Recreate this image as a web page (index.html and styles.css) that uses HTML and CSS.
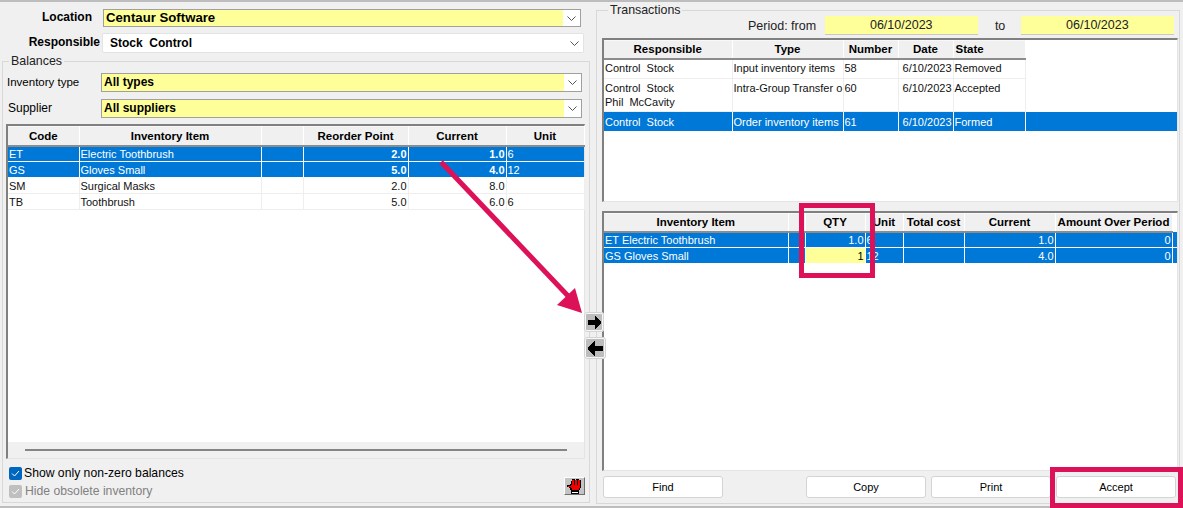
FILE: index.html
```html
<!DOCTYPE html>
<html lang="en">
<head>
    <meta charset="UTF-8">
    <title>Inventory Order</title>
    <link rel="stylesheet" href="styles.css">
</head>
<body>
    <div class="window">
        <div class="left">
            <div class="field field-location">
                <label>Location</label>
                <div class="combo combo-yellow combo-big">Centaur Software<span class="drop"><svg width="9" height="5" viewBox="0 0 9 5"><path d="M0.5 0.5 L4.5 4.5 L8.5 0.5" fill="none" stroke="#555"/></svg></span></div>
            </div>
            <div class="field field-responsible">
                <label>Responsible</label>
                <div class="combo combo-white">Stock&nbsp; Control<span class="drop"><svg width="9" height="5" viewBox="0 0 9 5"><path d="M0.5 0.5 L4.5 4.5 L8.5 0.5" fill="none" stroke="#555"/></svg></span></div>
            </div>

            <fieldset class="group group-balances">
                <legend>Balances</legend>
                <div class="field field-type">
                    <label>Inventory type</label>
                    <div class="combo combo-yellow">All types<span class="drop"><svg width="9" height="5" viewBox="0 0 9 5"><path d="M0.5 0.5 L4.5 4.5 L8.5 0.5" fill="none" stroke="#555"/></svg></span></div>
                </div>
                <div class="field field-supplier">
                    <label>Supplier</label>
                    <div class="combo combo-yellow">All suppliers<span class="drop"><svg width="9" height="5" viewBox="0 0 9 5"><path d="M0.5 0.5 L4.5 4.5 L8.5 0.5" fill="none" stroke="#555"/></svg></span></div>
                </div>

                <div class="grid grid-balances">
                    <table>
                        <colgroup>
                            <col class="w71"><col class="w182"><col class="w42"><col class="w105"><col class="w98"><col class="w78">
                        </colgroup>
                        <thead>
                            <tr><th>Code</th><th>Inventory Item</th><th></th><th>Reorder Point</th><th>Current</th><th>Unit</th></tr>
                        </thead>
                        <tbody>
                            <tr class="sel"><td>ET</td><td>Electric Toothbrush</td><td></td><td class="num strong">2.0</td><td class="num strong">1.0</td><td>6</td></tr>
                            <tr class="sel"><td>GS</td><td>Gloves Small</td><td></td><td class="num strong">5.0</td><td class="num strong">4.0</td><td>12</td></tr>
                            <tr><td>SM</td><td>Surgical Masks</td><td></td><td class="num">2.0</td><td class="num">8.0</td><td></td></tr>
                            <tr><td>TB</td><td>Toothbrush</td><td></td><td class="num">5.0</td><td class="num">6.0</td><td>6</td></tr>
                        </tbody>
                    </table>
                    <div class="hscroll"><div class="hscroll-line"></div></div>
                </div>

                <div class="balances-foot">
                    <div class="checks">
                        <div class="check">
                            <span class="box box-on"><svg width="9" height="7" viewBox="0 0 9 7"><path d="M1 3.5 L3.5 6 L8 1" fill="none" stroke="#fff"/></svg></span>
                            Show only non-zero balances
                        </div>
                        <div class="check check-off">
                            <span class="box box-off"><svg width="9" height="7" viewBox="0 0 9 7"><path d="M1 3.5 L3.5 6 L8 1" fill="none" stroke="#fff"/></svg></span>
                            Hide obsolete inventory
                        </div>
                    </div>
                    <div class="hand-btn">
                        <svg width="15" height="15" viewBox="0 0 15 15" shape-rendering="crispEdges">
                            <path d="M4 2h1V0h3v1h1V0h3v1h2v8h-1v2h-1v1H4v-1H3V9H2V8H0V6h3V5h1z" fill="#000"/>
                            <path d="M5 1h2v6H5zM8 1h2v6H8zM11 1h2v6h-2z" fill="#f00000"/>
                            <path d="M4 6h9v3h-1v2H5V9H4V8H1V7h3z" fill="#f00000"/>
                            <path d="M4 12h8v3H4z" fill="#000"/>
                            <path d="M5 13h6v1H5z" fill="#fff"/>
                        </svg>
                    </div>
                </div>
            </fieldset>
        </div>

        <fieldset class="group group-trans">
            <legend>Transactions</legend>
            <div class="period">
                <span class="period-from">Period: from</span>
                <div class="date">06/10/2023</div>
                <span class="period-to">to</span>
                <div class="date">06/10/2023</div>
            </div>

            <div class="grid grid-trans">
                <table>
                    <colgroup>
                        <col class="w128"><col class="w111"><col class="w55"><col class="w55"><col class="w72"><col>
                    </colgroup>
                    <thead>
                        <tr><th>Responsible</th><th>Type</th><th>Number</th><th>Date</th><th class="left-head">State</th><th class="blank"></th></tr>
                    </thead>
                    <tbody>
                        <tr class="r20 first"><td>Control&nbsp; Stock</td><td>Input inventory items</td><td>58</td><td class="num">6/10/2023</td><td>Removed</td><td class="blank"></td></tr>
                        <tr class="r33"><td>Control&nbsp; Stock<br>Phil&nbsp; McCavity</td><td>Intra-Group Transfer o</td><td>60</td><td class="num">6/10/2023</td><td>Accepted</td><td class="blank"></td></tr>
                        <tr class="sel r20"><td>Control&nbsp; Stock</td><td>Order inventory items</td><td>61</td><td class="num">6/10/2023</td><td>Formed</td><td></td></tr>
                    </tbody>
                </table>
            </div>

            <div class="grid grid-items">
                <table>
                    <colgroup>
                        <col class="w184"><col class="w17"><col class="w60"><col class="w38"><col class="w61"><col class="w91"><col class="w117"><col>
                    </colgroup>
                    <thead>
                        <tr><th>Inventory Item</th><th></th><th>QTY</th><th>Unit</th><th>Total cost</th><th>Current</th><th>Amount Over Period</th><th class="blank"></th></tr>
                    </thead>
                    <tbody>
                        <tr class="sel"><td>ET Electric Toothbrush</td><td></td><td class="num">1.0</td><td>6</td><td></td><td class="num">1.0</td><td class="num">0</td><td></td></tr>
                        <tr class="sel"><td>GS Gloves Small</td><td></td><td class="num editing">1</td><td>12</td><td></td><td class="num">4.0</td><td class="num">0</td><td></td></tr>
                    </tbody>
                </table>
            </div>

            <div class="actions">
                <button class="btn">Find</button>
                <span class="spacer"></span>
                <button class="btn">Copy</button>
                <button class="btn">Print</button>
                <button class="btn">Accept</button>
            </div>
        </fieldset>

        <div class="move-btn move-right">
            <svg width="13" height="13" viewBox="0 0 13 13" shape-rendering="crispEdges"><path d="M0 4h7V0h1v1h1v1h1v1h1v1h1v1h1v3h-1v1h-1v1h-1v1H9v1H8v1H7V9H0z" fill="#000"/></svg>
        </div>
        <div class="move-btn move-left">
            <svg width="15" height="15" viewBox="0 0 15 15" shape-rendering="crispEdges"><path d="M15 5H7V0H6v1H5v1H4v1H3v1H2v1H1v1H0v3h1v1h1v1h1v1h1v1h1v1h1v1h1v-5h8z" fill="#000"/></svg>
        </div>

        <!-- annotations on top of the screenshot -->
        <svg class="pointer" width="1183" height="508" viewBox="0 0 1183 508">
            <path d="M441 162 L570 298" stroke="#dd1158" stroke-width="5" fill="none"/>
            <path d="M582 313 L557 305 L575 288 Z" fill="#dd1158"/>
        </svg>
        <div class="mark mark-qty"></div>
        <div class="mark mark-accept"></div>
    </div>
</body>
</html>
```

FILE: styles.css
```css
* {
    box-sizing: border-box;
}

html, body {
    margin: 0;
    padding: 0;
}

body {
    font-family: "Liberation Sans", Arial, sans-serif;
    font-size: 11px;
    color: #000;
    background-color: #f0f0f0;
}

.window {
    position: relative;
    width: 1183px;
    height: 508px;
    display: flex;
    border-top: 2px solid #bdbdbd;
    border-bottom: 2px solid #bdbdbd;
    background-color: #f0f0f0;
}

.left {
    width: 596px;
    padding-left: 2px;
    flex: none;
}

.field {
    display: flex;
    align-items: center;
}

.field label {
    flex: none;
    font-size: 12px;
    padding-bottom: 2px;
}

.field-location {
    margin-top: 7px;
    height: 18px;
}

.field-location label {
    width: 90px;
    text-align: right;
    font-weight: bold;
    margin-right: 11px;
}

.field-location .combo {
    width: 478px;
}

.field-responsible {
    margin-top: 6px;
    height: 20px;
}

.field-responsible label {
    width: 98px;
    text-align: right;
    font-weight: bold;
    margin-right: 2px;
}

.field-responsible .combo {
    width: 482px;
}

.field-type {
    margin-top: 5px;
    height: 19px;
    padding-left: 4px;
}

.field-supplier {
    margin-top: 7px;
    height: 19px;
    padding-left: 5px;
}

.field-type label {
    width: 94px;
    font-size: 11.5px;
}

.field-supplier label {
    width: 93px;
}

.field-type .combo,
.field-supplier .combo {
    width: 481px;
}

.combo {
    position: relative;
    height: 100%;
    padding-left: 2px;
    font-weight: bold;
    font-size: 12px;
    line-height: 16px;
    white-space: nowrap;
}

.combo-yellow {
    background-color: #ffff99;
    border: 1px solid #a0a0a0;
}

.combo-big {
    font-size: 13.2px;
}

.combo-white {
    background-color: #fff;
    border: 1px solid #e3e3e3;
    border-radius: 2px;
    padding-left: 7px;
    line-height: 18px;
    font-size: 12px;
}

.drop {
    position: absolute;
    top: 0;
    right: 0;
    bottom: 0;
    width: 17px;
    background-color: #fff;
    display: flex;
    align-items: center;
    justify-content: center;
}

.group {
    margin: 0;
    padding: 0;
    border: 1px solid #d8d8d8;
    min-width: 0;
}

.group legend {
    margin-left: 6px;
    padding: 0 2px;
    font-size: 12.4px;
    line-height: 14px;
    color: #222;
}

.group-balances {
    width: 588px;
    height: 449px;
    margin-top: 1px;
}

.group-trans {
    width: 584px;
    height: 501px;
    padding: 0 5px;
    margin-top: 1px;
    flex: none;
}

.grid {
    background-color: #fff;
    border-top: 2px solid #808080;
    border-left: 2px solid #808080;
    border-right: 1px solid #e4e4e4;
    border-bottom: 1px solid #e4e4e4;
}

.grid table {
    width: 100%;
    table-layout: fixed;
    border-collapse: collapse;
}

.grid th {
    height: 18px;
    padding: 0;
    font-size: 11.5px;
    background-color: #f0f0f0;
    border-top: 1px solid #f8f8f8;
    border-right: 1px solid #fff;
    border-bottom: 2px solid #8c8c8c;
    text-align: center;
    white-space: nowrap;
    overflow: hidden;
}

.grid th.left-head {
    text-align: left;
    padding-left: 2px;
}

.grid th.blank {
    background-color: #fff;
    border: none;
}

.grid td {
    height: 16px;
    padding: 0 2px 0 1px;
    font-size: 11px;
    border-right: 1px solid #eeeeee;
    border-bottom: 1px solid #eeeeee;
    white-space: nowrap;
    overflow: hidden;
    vertical-align: middle;
    color: #111;
}

.grid td.blank {
    border: none;
}

.grid td.num {
    text-align: right;
    padding-right: 1px;
}

.grid td.strong {
    font-weight: bold;
}

.grid tr.sel td {
    background-color: #0078d7;
    color: #fff;
    border-right-color: #fff;
    border-bottom-color: #fff;
}

.grid tr.sel td:last-child {
    border-right: none;
}

.grid td.editing,
.grid tr.sel td.editing {
    background-color: #ffff99;
    color: #000;
    border-left: 1px solid #fff;
}

.grid tr.r20 td {
    height: 20px;
}

.grid tr.first td {
    padding-bottom: 2px;
}

.grid tr.r33 td {
    height: 33px;
    vertical-align: top;
    padding-top: 2px;
    line-height: 14px;
}

.grid-balances {
    display: flex;
    flex-direction: column;
    width: 579px;
    height: 335px;
    margin: 6px 0 0 3px;
}

.grid-balances table {
    flex: none;
}

.grid-balances th {
    height: 19px;
    padding-top: 1px;
}

.hscroll {
    margin-top: auto;
    height: 16px;
    padding: 7px 17px 0;
    background-color: #f0f0f0;
}

.hscroll-line {
    height: 2px;
    background-color: #858585;
}

.balances-foot {
    display: flex;
    justify-content: space-between;
    padding: 7px 4px 0 6px;
}

.check {
    display: flex;
    align-items: center;
    gap: 2px;
    height: 14px;
    font-size: 12.2px;
    margin-bottom: 4px;
}

.check-off {
    gap: 3px;
    color: #808080;
}

.box {
    width: 13px;
    height: 13px;
    border-radius: 2px;
    display: flex;
    align-items: center;
    justify-content: center;
    flex: none;
}

.box-on {
    background-color: #0067c0;
}

.box-off {
    background-color: #bfbfbf;
}

.hand-btn {
    width: 21px;
    height: 18px;
    margin-top: 11px;
    display: flex;
    align-items: center;
    justify-content: center;
    background-color: #c4c4c4;
    border-right: 1px solid #6e6e6e;
    border-bottom: 1px solid #6e6e6e;
    border-top: 1px solid #fff;
    border-left: 1px solid #fff;
}

.period {
    display: flex;
    align-items: center;
    height: 19px;
    margin-top: -1px;
    font-size: 12.5px;
    color: #222;
}

.period-from {
    margin-left: 146px;
    width: 77px;
}

.period-to {
    width: 43px;
    padding-left: 17px;
}

.date {
    width: 154px;
    height: 19px;
    background-color: #ffff99;
    border-bottom: 1px solid #c8c8c8;
    text-align: center;
    line-height: 19px;
}

.grid-trans {
    width: 576px;
    height: 164px;
    margin-top: 3px;
}

.grid-items {
    width: 576px;
    height: 260px;
    margin-top: 9px;
}

.actions {
    display: flex;
    gap: 5px;
    margin-top: 5px;
    padding-left: 1px;
}

.spacer {
    flex: none;
    width: 73px;
}

.btn {
    flex: none;
    width: 120px;
    height: 22px;
    padding: 0;
    font-family: inherit;
    font-size: 11px;
    color: #000;
    background-color: #fff;
    border: 1px solid #d4d4d4;
    border-radius: 3px;
}

.move-btn {
    position: absolute;
    left: 584px;
    display: flex;
    align-items: center;
    justify-content: center;
    background-color: #bdbdbd;
    border: 2px solid #f6f6f6;
    outline: 1px solid #d4d4d4;
    outline-offset: -1px;
    border-radius: 3px;
}

.move-right {
    top: 310px;
    width: 20px;
    height: 20px;
}

.move-left {
    top: 335px;
    width: 22px;
    height: 22px;
}

.pointer {
    position: absolute;
    left: 0;
    top: -2px;
}

.mark {
    position: absolute;
    border: 5px solid #dd1158;
}

.mark-qty {
    left: 799px;
    top: 201px;
    width: 76px;
    height: 75px;
}

.mark-accept {
    left: 1050px;
    top: 465px;
    width: 133px;
    height: 41px;
}

.w17 { width: 17px; }
.w38 { width: 38px; }
.w42 { width: 42px; }
.w55 { width: 55px; }
.w60 { width: 60px; }
.w61 { width: 61px; }
.w71 { width: 71px; }
.w72 { width: 72px; }
.w78 { width: 78px; }
.w91 { width: 91px; }
.w98 { width: 98px; }
.w105 { width: 105px; }
.w111 { width: 111px; }
.w117 { width: 117px; }
.w128 { width: 128px; }
.w182 { width: 182px; }
.w184 { width: 184px; }
```
